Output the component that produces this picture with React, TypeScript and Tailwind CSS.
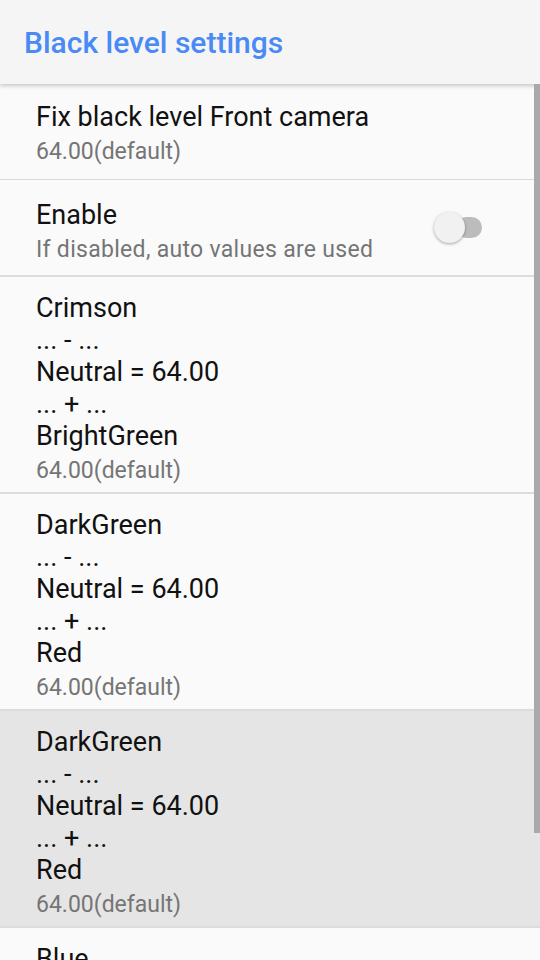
import React from 'react';

type Pref = {
  lines: string[];
  summary: string;
  pressed?: boolean;
};

const prefs: Pref[] = [
  { lines: ['Crimson', '... - ...', 'Neutral = 64.00', '... + ...', 'BrightGreen'], summary: '64.00(default)' },
  { lines: ['DarkGreen', '... - ...', 'Neutral = 64.00', '... + ...', 'Red'], summary: '64.00(default)' },
  { lines: ['DarkGreen', '... - ...', 'Neutral = 64.00', '... + ...', 'Red'], summary: '64.00(default)', pressed: true },
  { lines: ['Blue', '... - ...', 'Neutral = 64.00', '... + ...', 'Red'], summary: '64.00(default)' },
];

function Toggle() {
  return (
    <div className="relative w-[50px] h-[32px] flex items-center">
      <div className="absolute left-[22px] w-[26px] h-[21px] rounded-full bg-[#bcbcbc]" />
      <div className="absolute left-0 w-[31px] h-[31px] rounded-full bg-[#f1f1f1] shadow-[0_1px_3px_rgba(0,0,0,0.35)]" />
    </div>
  );
}

export default function App() {
  return (
    <div className="w-[540px] h-[960px] overflow-hidden bg-[#fafafa] flex flex-col font-['Roboto',sans-serif]">
      {/* Toolbar */}
      <div className="relative z-10 h-[84px] shrink-0 bg-[#f5f5f5] shadow-[0_2px_4px_rgba(0,0,0,0.2)] flex items-center px-[24px]">
        <h1 className="text-[30px] font-medium text-[#4a8af4] leading-none pt-[2px]">Black level settings</h1>
      </div>

      <div className="relative flex-1 overflow-hidden">
        {/* overlay scrollbar */}
        <div className="absolute right-0 top-0 w-[6px] h-[749px] bg-[#a9a9a9] z-10" />

        <div className="flex flex-col">
          <div className="h-[96px] pl-[36px] pr-[24px] pt-[4px] flex flex-col justify-center border-b border-[#d9d9d9]">
            <div className="text-[27px] leading-[32px] text-[#111111] pt-[1px]">Fix black level Front camera</div>
            <div className="text-[23px] leading-[30px] text-[#757575] mt-[4px]">64.00(default)</div>
          </div>

          <div className="h-[97px] pl-[36px] pr-[56px] flex items-center justify-between border-b-2 border-[#dcdcdc]">
            <div className="flex flex-col pt-[9px]">
              <div className="text-[27px] leading-[32px] text-[#111111]">Enable</div>
              <div className="text-[23px] leading-[30px] text-[#757575] mt-[4px] tracking-[0.3px]">If disabled, auto values are used</div>
            </div>
            <Toggle />
          </div>

          {prefs.map((p, i) => (
            <div
              key={i}
              className={
                p.pressed
                  ? 'h-[217px] pl-[36px] pr-[24px] pt-[15px] flex flex-col border-b-2 border-[#dcdcdc] bg-[#e5e5e5]'
                  : 'h-[217px] pl-[36px] pr-[24px] pt-[15px] flex flex-col border-b-2 border-[#dcdcdc]'
              }
            >
              {p.lines.map((l, j) => (
                <div key={j} className="text-[27px] leading-[32px] text-[#111111] whitespace-pre">{l}</div>
              ))}
              <div className="text-[23px] leading-[30px] text-[#757575] mt-[4px]">{p.summary}</div>
            </div>
          ))}
        </div>
      </div>
    </div>
  );
}
